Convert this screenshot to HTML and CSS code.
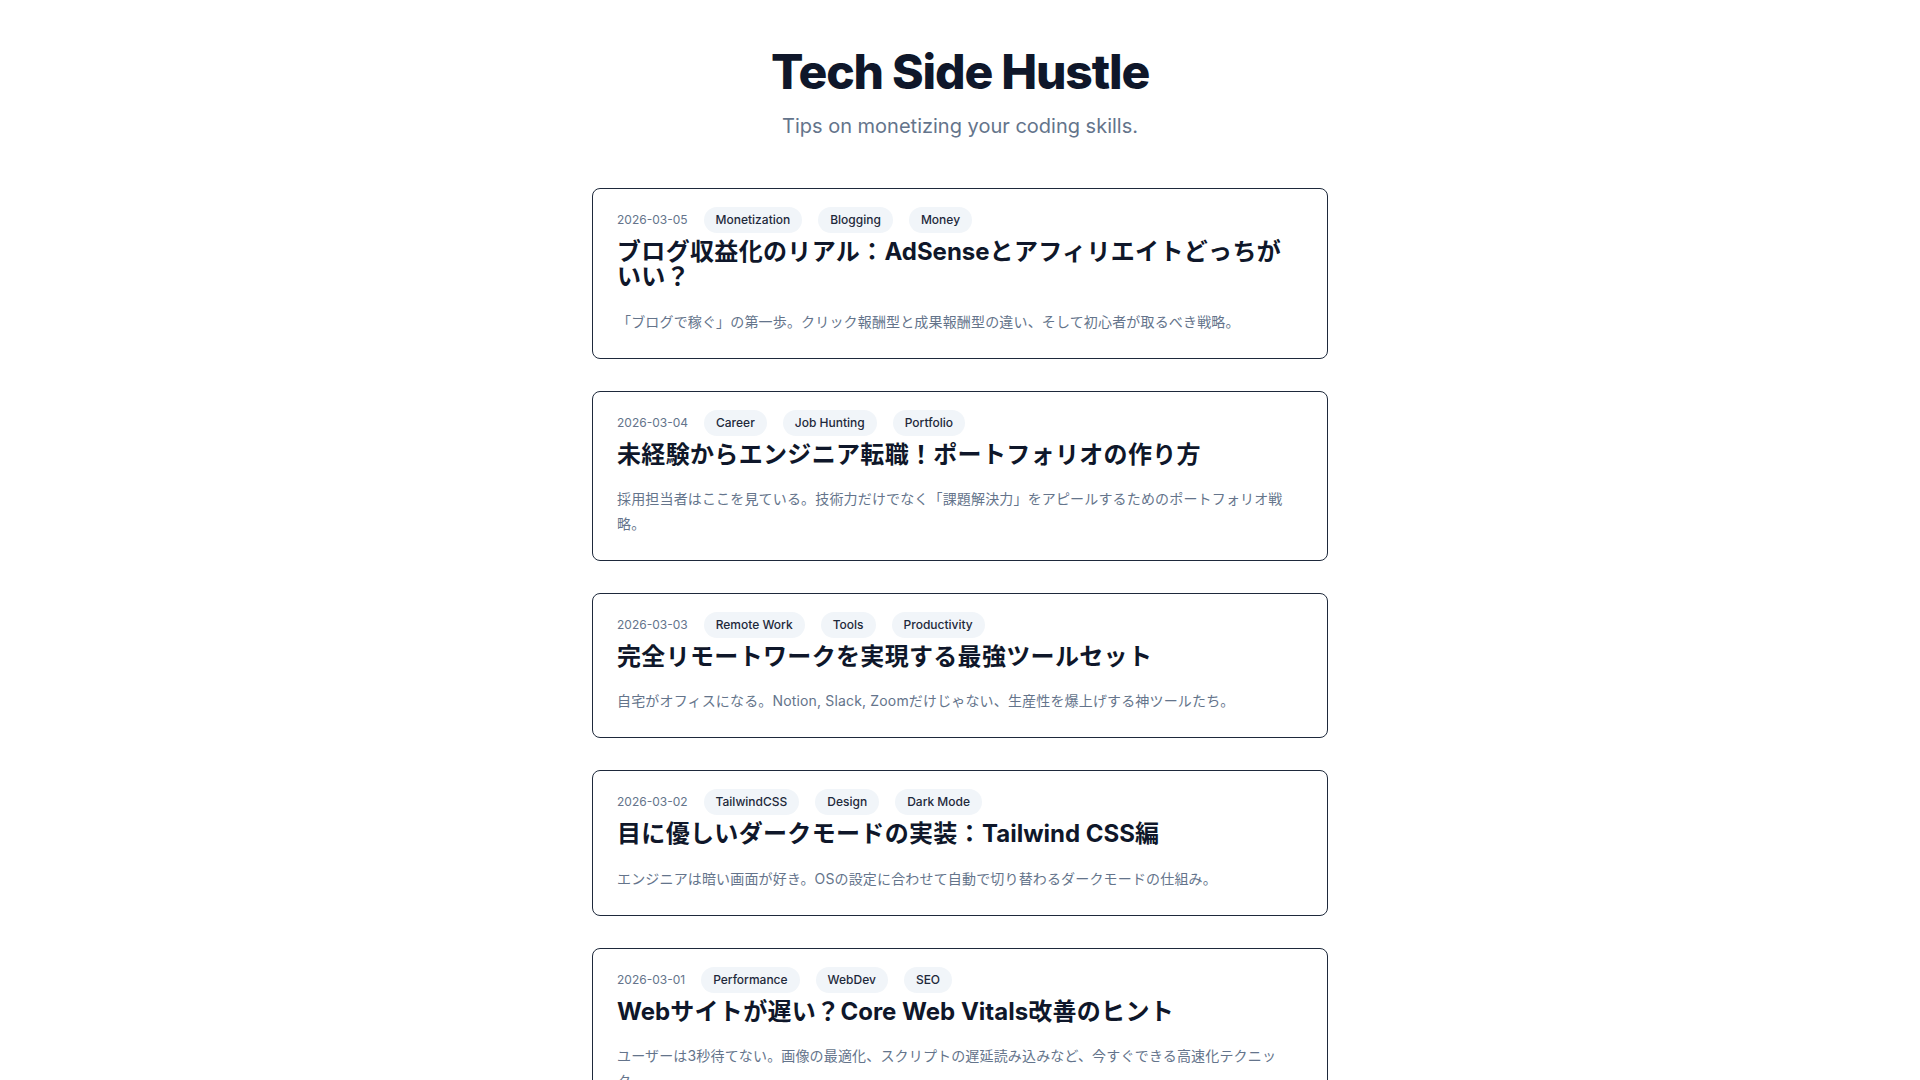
FILE: index.html
```html
<!DOCTYPE html>
<html lang="ja">
<head>
<meta charset="utf-8">
<title>Tech Side Hustle</title>
<link rel="stylesheet" href="styles.css">
</head>
<body>
<div class="page">
  <header class="site-header">
    <h1 class="site-title">Tech Side Hustle</h1>
    <p class="site-sub">Tips on monetizing your coding skills.</p>
  </header>
  <main class="posts">
    <article class="card">
      <div class="meta">
        <span class="date">2026-03-05</span>
        <span class="tag">Monetization</span>
        <span class="tag">Blogging</span>
        <span class="tag">Money</span>
      </div>
      <h2 class="post-title">ブログ収益化のリアル：<span class="latin" lang="en">AdSense</span>とアフィリエイトどっちがいい？</h2>
      <p class="excerpt">「ブログで稼ぐ」の第一歩。クリック報酬型と成果報酬型の違い、そして初心者が取るべき戦略。</p>
    </article>
    <article class="card">
      <div class="meta">
        <span class="date">2026-03-04</span>
        <span class="tag">Career</span>
        <span class="tag">Job Hunting</span>
        <span class="tag">Portfolio</span>
      </div>
      <h2 class="post-title">未経験からエンジニア転職！ポートフォリオの作り方</h2>
      <p class="excerpt">採用担当者はここを見ている。技術力だけでなく「課題解決力」をアピールするためのポートフォリオ戦略。</p>
    </article>
    <article class="card">
      <div class="meta">
        <span class="date">2026-03-03</span>
        <span class="tag">Remote Work</span>
        <span class="tag">Tools</span>
        <span class="tag">Productivity</span>
      </div>
      <h2 class="post-title">完全リモートワークを実現する最強ツールセット</h2>
      <p class="excerpt">自宅がオフィスになる。Notion, Slack, Zoomだけじゃない、生産性を爆上げする神ツールたち。</p>
    </article>
    <article class="card">
      <div class="meta">
        <span class="date">2026-03-02</span>
        <span class="tag">TailwindCSS</span>
        <span class="tag">Design</span>
        <span class="tag">Dark Mode</span>
      </div>
      <h2 class="post-title">目に優しいダークモードの実装：<span class="latin" lang="en">Tailwind CSS</span>編</h2>
      <p class="excerpt">エンジニアは暗い画面が好き。OSの設定に合わせて自動で切り替わるダークモードの仕組み。</p>
    </article>
    <article class="card">
      <div class="meta">
        <span class="date">2026-03-01</span>
        <span class="tag">Performance</span>
        <span class="tag">WebDev</span>
        <span class="tag">SEO</span>
      </div>
      <h2 class="post-title"><span class="latin" lang="en">Web</span>サイトが遅い？<span class="latin" lang="en">Core Web Vitals</span>改善のヒント</h2>
      <p class="excerpt">ユーザーは3秒待てない。画像の最適化、スクリプトの遅延読み込みなど、今すぐできる高速化テクニック。</p>
    </article>
  </main>
</div>
</body>
</html>
```

FILE: styles.css
```css
* { box-sizing: border-box; }
html, body { margin: 0; padding: 0; background: #ffffff; }
body {
  font-family: Inter, "Noto Sans CJK JP", "Noto Sans", sans-serif;
  color: #0f172a;
}
.page {
  max-width: 768px;
  margin: 0 auto;
  padding: 48px 16px 48px;
}
.site-header {
  text-align: center;
  margin-bottom: 48px;
}
.site-title {
  margin: 0;
  font-size: 48px;
  line-height: 48px;
  font-weight: 800;
  letter-spacing: -0.025em;
  color: #0f172a;
}
.site-sub {
  margin: 16px 0 0;
  font-size: 20px;
  line-height: 28px;
  color: #64748b;
}
.posts {
  display: flex;
  flex-direction: column;
  gap: 32px;
}
.card {
  border: 1px solid #1e293b;
  border-radius: 8px;
  padding: 18px 24px 23.5px;
}
.meta {
  display: flex;
  align-items: center;
  flex-wrap: wrap;
  gap: 16px;
}
.date {
  font-size: 12px;
  line-height: 16px;
  color: #64748b;
}
.tag {
  font-size: 12px;
  line-height: 16px;
  font-weight: 500;
  color: #1e293b;
  background: #f1f5f9;
  border-radius: 9999px;
  padding: 5px 12px;
}
.post-title {
  margin: 6px 0 0;
  font-size: 24px;
  line-height: 25px;
  font-weight: 700;
  letter-spacing: 0.33px;
  color: #0f172a;
}
.post-title .latin {
  letter-spacing: 0;
}
.excerpt {
  margin: 20.5px 0 0;
  font-size: 14px;
  line-height: 24.5px;
  letter-spacing: 0.16px;
  color: #64748b;
}
```
